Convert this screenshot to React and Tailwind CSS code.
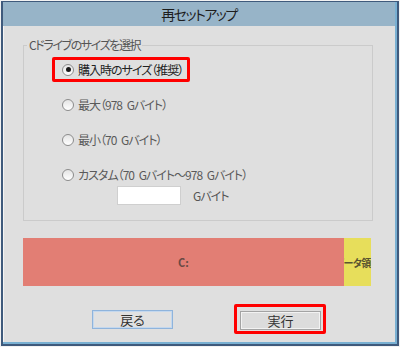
const jp = "[font-family:'Noto_Sans_CJK_JP','Noto_Sans',sans-serif] [font-feature-settings:'palt']";

function Radio({ checked }) {
  return (
    <span className="w-[12px] h-[12px] rounded-full border border-[#8c8c8c] bg-gradient-to-b from-[#e4e4e4] to-white flex items-center justify-center shrink-0">
      {checked && <span className="w-[5px] h-[5px] rounded-full bg-[#1a1a1a]"></span>}
    </span>
  );
}

function Option({ label, checked, marked }) {
  return (
    <div
      className={`ml-[28px] h-[25px] inline-flex items-center gap-[4px] pl-[7px] pr-[4px] border-[3px] rounded-[2px] ${
        marked ? 'border-[#ff0000]' : 'border-transparent'
      }`}
    >
      <Radio checked={checked} />
      <span className={`text-[12px] tracking-[-1px] [word-spacing:3px] leading-none whitespace-nowrap ${checked ? 'text-[#222]' : 'text-[#5a5a5a]'}`}>{label}</span>
    </div>
  );
}

export default function App() {
  return (
    <div className={`w-[400px] h-[347px] bg-[#f2f2f2] p-[1px] ${jp}`}>
      <div className="h-full flex flex-col border-l-2 border-t border-r-2 border-b-2 border-[#3f5a7c]">
        <div className="flex-1 flex flex-col border-r-2 border-b-2 border-[#79b0d2]">
          {/* Title bar */}
          <div className="h-[24px] bg-[#97b4c8] flex items-center justify-center text-[14px] tracking-[-1.5px] text-[#1e1e1e]">
            再セットアップ
          </div>

          {/* Body */}
          <div className="flex-1 bg-[#dfdfdf] border-l border-[#f4f4f4] flex flex-col">
            <fieldset className="mt-[12px] ml-[19px] w-[350px] border border-[#cbcbcb] pb-[15px]">
              <legend className="ml-[3px] px-[2px] text-[12px] tracking-[-1.4px] leading-[14px] text-[#555]">Cドライブのサイズを選択</legend>
              <div className="mt-[5px] flex flex-col items-start gap-[10px]">
                <Option label="購入時のサイズ（推奨）" checked marked />
                <Option label="最大（978 Gバイト）" />
                <Option label="最小（70 Gバイト）" />
                <Option label="カスタム（70 Gバイト〜978 Gバイト）" />
              </div>
              <div className="ml-[93px] -mt-[1px] flex items-center gap-[12px]">
                <div className="w-[64px] h-[19px] bg-white border border-[#cfcfcf]"></div>
                <span className="text-[12px] tracking-[-1px] text-[#555]">Gバイト</span>
              </div>
            </fieldset>

            {/* Partition bar */}
            <div className="mt-[17px] ml-[19px] w-[348px] h-[48px] flex">
              <div className="w-[321px] bg-[#e27e74] flex items-center justify-center text-[11px] font-bold text-[#6a4a44]">
                C:
              </div>
              <div className="flex-1 bg-[#e7de5b] flex items-center justify-center overflow-hidden text-[10px] font-bold tracking-[-0.5px] text-[#5a5430] whitespace-nowrap">
                データ領域
              </div>
            </div>

            {/* Buttons */}
            <div className="mt-[18px] flex items-center">
              <button className="ml-[88px] w-[81px] h-[19px] bg-[#e1e1e1] border border-[#8fb4dc] shadow-[inset_0_0_0_1px_#c4d8ee] text-[13px] leading-none text-[#333]">
                戻る
              </button>
              <div className="ml-[61px] border-[3px] border-[#ff0000] rounded-[2px] pl-[3px] pr-[2px]">
                <button className="w-[81px] h-[19px] bg-[#dcdcdc] border border-[#a3a3a3] shadow-[inset_0_0_0_1px_#f2f2f2] text-[13px] leading-none text-[#333]">
                  実行
                </button>
              </div>
            </div>
          </div>
        </div>
      </div>
    </div>
  );
}
